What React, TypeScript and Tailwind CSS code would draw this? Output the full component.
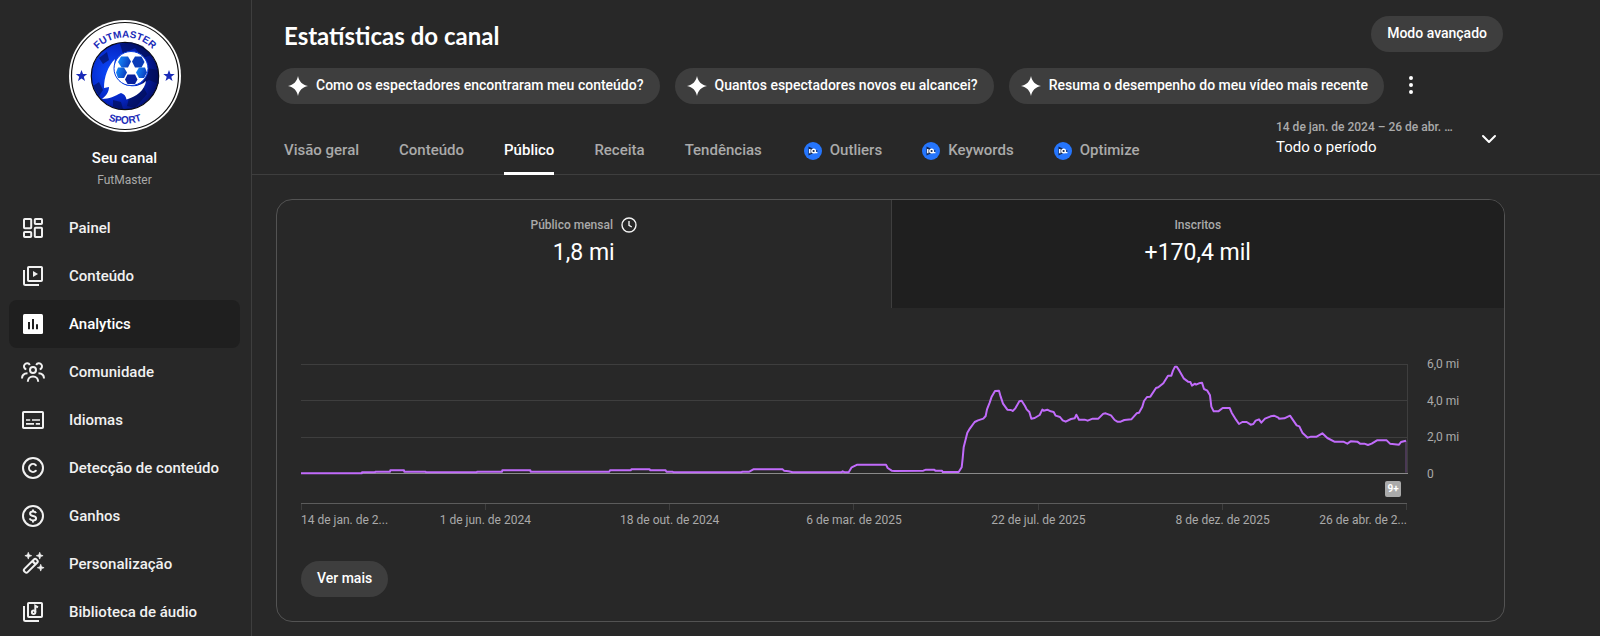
import type { ReactNode } from "react";
import { ChevronDown, Copyright, EllipsisVertical } from "lucide-react";

function Icon({ children }: { children: ReactNode }) {
  return (
    <svg
      viewBox="0 0 24 24"
      className="size-6 shrink-0"
      fill="none"
      stroke="currentColor"
      strokeWidth="2"
      aria-hidden="true"
    >
      {children}
    </svg>
  );
}

const stack = <path d="M3 6v13.5A1.5 1.5 0 0 0 4.500 21H18" />;

const navItems: { label: string; active?: boolean; icon: ReactNode }[] = [
  {
    label: "Painel",
    icon: (
      <Icon>
        <rect x="3" y="3" width="7.200" height="9.200" rx="0.800" />
        <rect x="3" y="16" width="7.200" height="5" rx="0.800" />
        <rect x="13.800" y="3" width="7.200" height="5" rx="0.800" />
        <rect x="13.800" y="11.800" width="7.200" height="9.200" rx="0.800" />
      </Icon>
    ),
  },
  {
    label: "Conteúdo",
    icon: (
      <Icon>
        {stack}
        <rect x="7" y="3" width="14" height="14" rx="0.800" />
        <path d="M12 7v6l5-3z" fill="currentColor" stroke="none" />
      </Icon>
    ),
  },
  {
    label: "Analytics",
    active: true,
    icon: (
      <Icon>
        <rect x="2" y="2" width="20" height="20" rx="1.500" fill="currentColor" stroke="none" />
        <path d="M8 10v7.300M12 7v10.300M16 12.300v5" stroke="#1f1f1f" strokeWidth="2" />
      </Icon>
    ),
  },
  {
    label: "Comunidade",
    icon: (
      <Icon>
        <circle cx="12" cy="10" r="3" />
        <path d="M6.800 21.800c0-3.300 2.200-5.300 5.200-5.300s5.200 2 5.200 5.300" />
        <path d="M8.800 4.900A3.100 3.100 0 1 0 5.300 9.400" />
        <path d="M15.200 4.900a3.100 3.100 0 1 1 3.500 4.500" />
        <path d="M1 18.500c0-3 1.800-5 5.500-5.200" />
        <path d="M23 18.500c0-3-1.800-5-5.500-5.200" />
      </Icon>
    ),
  },
  {
    label: "Idiomas",
    icon: (
      <Icon>
        <rect x="2" y="4" width="20" height="16" rx="0.800" />
        <path d="M5 12h4.200M11 12h8M5 15.900h8M14.800 15.900H19" strokeWidth="1.700" />
      </Icon>
    ),
  },
  { label: "Detecção de conteúdo", icon: <Copyright className="size-6 shrink-0" strokeWidth={2} /> },
  {
    label: "Ganhos",
    icon: (
      <Icon>
        <circle cx="12" cy="12" r="10" />
        <path
          d="M15 9.200C14.600 8.100 13.500 7.600 12 7.600c-1.700 0-2.900.8-2.900 2.100 0 3.100 6 1.300 6 4.500 0 1.400-1.300 2.200-3.100 2.200-1.700 0-2.900-.7-3.200-2M12 5.500v2M12 16.500v2"
          strokeWidth="2"
        />
      </Icon>
    ),
  },
  {
    label: "Personalização",
    icon: (
      <Icon>
        <rect x="1.300" y="11.500" width="17" height="4.600" rx="1.800" transform="rotate(-45 9.800 13.800)" />
        <path d="M11.300 9l3.400 3.400" strokeWidth="2.400" />
        <path
          d="M7.300.3l.9 2.500 2.500.9-2.500.9-.9 2.500-.9-2.500-2.500-.9 2.500-.9zM18.700.3l.9 2.500 2.500.9-2.500.9-.9 2.500-.9-2.500-2.500-.9 2.500-.9zM19.700 12.300l.9 2.500 2.500.9-2.500.9-.9 2.500-.9-2.500-2.500-.9 2.500-.9z"
          fill="currentColor"
          strokeWidth="0.700"
        />
      </Icon>
    ),
  },
  {
    label: "Biblioteca de áudio",
    icon: (
      <Icon>
        {stack}
        <rect x="7" y="3" width="14" height="14" rx="0.800" />
        <circle cx="12.600" cy="12.200" r="1.700" />
        <path d="M14.300 12.200V5.800l2.700 1.500" />
      </Icon>
    ),
  },
];

function Star({ x }: { x: number }) {
  return (
    <path
      transform={`translate(${x} 56)`}
      fill="#1a2bb8"
      d="M0-6 1.500-1.900 5.700-1.900 2.300.8 3.500 5 0 2.500-3.500 5-2.300.8-5.700-1.900-1.500-1.900z"
    />
  );
}

function ChannelLogo() {
  return (
    <svg viewBox="0 0 112 112" className="size-28" role="img" aria-label="FutMaster Sport">
      <defs>
        <radialGradient id="field" cx="0.3" cy="0.45" r="0.75">
          <stop offset="0" stopColor="#0b4bff" />
          <stop offset="0.55" stopColor="#0526c4" />
          <stop offset="1" stopColor="#020a5c" />
        </radialGradient>
        <linearGradient id="patch" x1="0" y1="0" x2="1" y2="0.3">
          <stop offset="0" stopColor="#1590ff" />
          <stop offset="1" stopColor="#0a3fc0" />
        </linearGradient>
        <path id="arc-top" d="M17.500 56a38.500 38.500 0 0 1 77 0" />
        <path id="arc-bottom" d="M8.500 56a47.500 47.500 0 0 0 95 0" />
      </defs>
      <circle cx="56" cy="56" r="56" fill="#fff" />
      <circle cx="56" cy="56" r="53.500" fill="none" stroke="#111" strokeWidth="1.200" />
      <circle cx="56" cy="56" r="33.700" fill="url(#field)" stroke="#0a0a14" strokeWidth="1.200" />
      <g fill="#020b4d" opacity="0.600">
        <path d="M51 24l3 10 12-6 8 10 8-3-8-9-12-4zM78 48l11 2 1 14-10-4-7 4zM60 78l14-12 4 8-12 14-8-2zM24 66l6-4 4 8-4 6zM44 80l8 2 2 7-10-2zM30 38l8-6 2 8-6 4z" />
      </g>
      <path
        fill="#fff"
        d="M46 39C39 46 35 57 35 68l5-1c0 5-3 9-7 12 7 0 13-3 19-6 3 1 5 3 5.500 6.500C67 77 76 70 77 61c-4 4-10 6-16 5-11-1-18-12-15-27z"
      />
      <circle cx="62" cy="48.500" r="17" fill="#fff" stroke="#0a3fe0" strokeWidth="1" />
      <g fill="url(#patch)">
        <path d="M52 36.500h7l3 5-3 6h-6.500l-3.500-5.500z" />
        <path d="M66 36.500h6.500l3 5.500-3 5.500H66l-3-6z" fill="#0a3cb8" />
        <path d="M49 47.500h6l3 5-3 5.500h-6l-2-5.500z" />
        <path d="M70 47.500h6l2 5-3 5.500h-5l-3-5.500z" />
        <path d="M58.500 54.500h7.500l2.500 5-2.500 4.500h-7.500l-2.500-4.500z" fill="#071f9c" />
      </g>
      <Star x={12.5} />
      <Star x={100} />
      <g fill="#1a2bb8" fontFamily="Liberation Sans, sans-serif" fontWeight="700" fontSize="10" textAnchor="middle">
        <text>
          <textPath href="#arc-top" startOffset="50%">FUTMASTER</textPath>
        </text>
        <text>
          <textPath href="#arc-bottom" startOffset="50%">SPORT</textPath>
        </text>
      </g>
    </svg>
  );
}

function Sidebar() {
  return (
    <aside className="flex w-[252px] shrink-0 flex-col border-r border-[#3e3e3e] pt-5">
      <div className="flex flex-col items-center pr-0.5">
        <ChannelLogo />
        <p className="mt-4 text-[15px] leading-5 font-medium text-white">Seu canal</p>
        <p className="mt-1 text-xs leading-4 text-[#aaa]">FutMaster</p>
      </div>
      <nav className="mt-4 flex flex-col pr-[11px] pl-[9px]">
        {navItems.map((item) => (
          <a
            key={item.label}
            href="#"
            aria-current={item.active ? "page" : undefined}
            className={
              item.active
                ? "flex h-12 items-center gap-6 rounded-lg bg-[#1f1f1f] pl-3 text-[15px] font-medium text-white"
                : "flex h-12 items-center gap-6 pl-3 text-[15px] font-medium text-[#f1f1f1]"
            }
          >
            {item.icon}
            {item.label}
          </a>
        ))}
      </nav>
    </aside>
  );
}

function Sparkle() {
  return (
    <svg viewBox="0 0 20 20" className="size-5 shrink-0" fill="#fff" aria-hidden="true">
      <path d="M10 0c1.100 5.600 4.400 8.900 10 10-5.600 1.100-8.900 4.400-10 10-1.100-5.600-4.400-8.900-10-10 5.600-1.100 8.900-4.400 10-10z" />
    </svg>
  );
}

function IqBadge() {
  return (
    <svg viewBox="0 0 18 18" className="size-[18px] shrink-0" aria-hidden="true">
      <circle cx="9" cy="9" r="9" fill="#2575fc" />
      <path d="M4.500 4.500 14 9l-9.500 4.500z" fill="#12264f" />
      <path d="M5.800 7v4.200" stroke="#fff" strokeWidth="1.500" />
      <circle cx="9.600" cy="9" r="1.800" fill="none" stroke="#fff" strokeWidth="1.400" />
      <path d="M10.400 10.600h3" stroke="#fff" strokeWidth="1.300" />
    </svg>
  );
}

const prompts = [
  "Como os espectadores encontraram meu conteúdo?",
  "Quantos espectadores novos eu alcancei?",
  "Resuma o desempenho do meu vídeo mais recente",
];

type TabItem = { label: string; active?: boolean; iq?: boolean };

const tabs: TabItem[] = [
  { label: "Visão geral" },
  { label: "Conteúdo" },
  { label: "Público", active: true },
  { label: "Receita" },
  { label: "Tendências" },
];

const extensionTabs: TabItem[] = [
  { label: "Outliers", iq: true },
  { label: "Keywords", iq: true },
  { label: "Optimize", iq: true },
];

function Tab({ tab }: { tab: TabItem }) {
  return (
    <button
      type="button"
      className={
        tab.active
          ? "flex h-[50px] items-center border-b-[3px] border-white pt-1 text-[15px] font-medium whitespace-nowrap text-white"
          : "flex h-[50px] items-center gap-2 border-b-[3px] border-transparent pt-1 text-[15px] font-medium whitespace-nowrap text-[#aaa]"
      }
    >
      {tab.iq && <IqBadge />}
      {tab.label}
    </button>
  );
}

const series =
  "0,328 182,328 183,325 222,325 223,323 267,323 268,319 309,319 310,323 374,323 375,325 527,325 528,323 603,323 604,319 688,319 689,323 925,323 927,319 989,319 991,316 1046,316 1048,319 1094,319 1096,323 1115,323 1117,325 " +
  "1322,325 1323,323 1345,323 1357,316 1445,316 1449,320 1463,322 1475,325 1621,325 1625,322 1631,325 1643,325 1652,310 1669,302 1755,302 1760,312 1772,320 1781,321 1867,320 1875,317 1899,317 1903,320 1923,320 1925,324 1973,324 " +
  "1982,310 1985,283 1988,250 1999,206 2007,193 2021,174 2031,169 2047,164 2054,156 2058,136 2066,116 2072,98 2082,81 2094,80 2099,98 2106,119 2119,137 2130,138 2135,141 2143,133 2155,112 2162,110 2172,126 2177,136 2185,144 2191,164 2201,162 2216,153 2224,137 2228,140 2239,137 2249,142 2258,144 2264,155 2277,159 2285,169 2294,173 2310,165 2321,163 2326,152 2334,167 2351,167 2360,170 2375,164 2392,164 2407,149 2414,148 2430,154 2441,168 2449,173 2459,173 2470,168 2491,166 2507,148 2514,146 2524,128 2529,111 2538,99 2548,98 2565,72 2572,70 2587,58 2601,35 2611,35 2616,20 2622,8 2627,8 2635,20 2648,43 2661,53 2668,54 2673,65 2682,59 2685,62 2694,58 " +
  "2703,56 2709,75 2719,80 2727,94 2731,128 2738,142 2752,142 2765,132 2786,132 2792,146 2805,167 2814,180 2824,174 2837,174 2849,182 2857,180 2864,170 2874,166 2881,176 2892,164 2909,157 2919,155 2932,161 2934,164 2950,163 2967,155 2987,184 2995,187 3004,206 3020,221 3030,218 3047,218 3064,208 3079,222 3100,233 3127,233 3139,239 3149,232 3169,233 3177,239 3190,239 3201,243 3212,239 3228,229 3257,229 3267,239 3294,242 3300,234 3315,230";

const dates = ["1 de jun. de 2024", "18 de out. de 2024", "6 de mar. de 2025", "22 de jul. de 2025", "8 de dez. de 2025"];

function Chart() {
  return (
    <div className="flex gap-5 px-6 pt-14 text-xs leading-4 text-[#aaa]">
      <div className="min-w-0 flex-1">
        <svg
          viewBox="0 0 3318 330"
          preserveAspectRatio="none"
          className="block h-[110px] w-full overflow-visible"
          fill="none"
          role="img"
          aria-label="Público mensal"
        >
          <g stroke="#3e3e3e">
            <path d="M0 1.500H3318M0 109.500H3318M0 220.500H3318" vectorEffect="non-scaling-stroke" />
            <path d="M3319.500 0V328" vectorEffect="non-scaling-stroke" />
          </g>
          <path d="M0 328.500H3321" stroke="#8a8a8a" vectorEffect="non-scaling-stroke" />
          <path d="M3315 230V326" stroke="#6d4b80" vectorEffect="non-scaling-stroke" />
          <polyline
            points={series}
            stroke="#c16bfb"
            strokeWidth="2"
            strokeLinejoin="round"
            vectorEffect="non-scaling-stroke"
          />
        </svg>
        <div className="flex h-[29px] items-start justify-end pt-[7px] pr-[6px]">
          <span className="flex size-4 items-center justify-center rounded-xs bg-[#aaa] text-[10px] font-bold text-white">
            9+
          </span>
        </div>
        <div className="flex h-[7px] justify-between border-t border-[#5c5c5c]">
          {[0, 1, 2, 3, 4, 5, 6].map((tick) => (
            <span key={tick} className="w-px bg-[#3e3e3e]" />
          ))}
        </div>
        <div className="mt-[2px] grid grid-cols-[1fr_2fr_2fr_2fr_2fr_2fr_1fr] text-center whitespace-nowrap">
          <span className="text-left">14 de jan. de 2...</span>
          {dates.map((date) => (
            <span key={date}>{date}</span>
          ))}
          <span className="text-right">26 de abr. de 2...</span>
        </div>
      </div>
      <div className="-mt-2 flex h-[126px] w-[53px] flex-col justify-between">
        <span>6,0 mi</span>
        <span>4,0 mi</span>
        <span>2,0 mi</span>
        <span>0</span>
      </div>
    </div>
  );
}

export default function App() {
  return (
    <div className="flex min-h-screen bg-[#282828] font-[Roboto,sans-serif] text-white">
      <Sidebar />
      <main className="min-w-0 flex-1">
        <header className="border-b border-[#3e3e3e] pt-4 pr-[95px] pl-6">
          <div className="flex h-9 items-center justify-between pr-0.5 pl-2">
            <h1 className="pt-1 font-[Lato,sans-serif] text-2xl leading-8 font-bold">Estatísticas do canal</h1>
            <button type="button" className="h-9 rounded-full bg-[#3e3e3e] px-4 pb-0.5 text-sm font-medium">
              Modo avançado
            </button>
          </div>
          <div className="mt-4 flex items-center gap-[15px]">
            {prompts.map((prompt) => (
              <button
                key={prompt}
                type="button"
                className="flex h-9 items-center gap-2 rounded-full bg-[#3e3e3e] pr-4 pl-3 text-sm font-medium whitespace-nowrap"
              >
                <Sparkle />
                <span className="pb-0.5">{prompt}</span>
              </button>
            ))}
            <button type="button" aria-label="Mais opções" className="pb-0.5">
              <EllipsisVertical className="size-6" fill="currentColor" />
            </button>
          </div>
          <div className="flex h-[70px] items-start justify-between">
            <nav className="-mb-px flex gap-10 self-end pl-2">
              {tabs.map((tab) => (
                <Tab key={tab.label} tab={tab} />
              ))}
              <div className="flex gap-10 pl-0.5">
                {extensionTabs.map((tab) => (
                  <Tab key={tab.label} tab={tab} />
                ))}
              </div>
            </nav>
            <button type="button" className="flex w-[229px] items-center justify-between pt-[15px] pr-1 text-left whitespace-nowrap">
              <span className="flex flex-col">
                <span className="text-xs leading-4 font-medium text-[#aaa]">14 de jan. de 2024 – 26 de abr. …</span>
                <span className="text-[15px] leading-6">Todo o período</span>
              </span>
              <ChevronDown className="size-6" />
            </button>
          </div>
        </header>
        <section className="mt-6 mr-[95px] ml-6 overflow-hidden rounded-2xl border border-[#535353]">
          <div className="grid h-[108px] grid-cols-2">
            <button type="button" className="flex flex-col items-center pt-[15px]">
              <span className="flex items-center gap-2 text-xs leading-5 font-medium text-[#aaa]">
                Público mensal
                <svg viewBox="0 0 16 16" className="size-4" fill="none" stroke="#f1f1f1" strokeWidth="1.400" aria-hidden="true">
                  <circle cx="8" cy="8" r="7" />
                  <path d="M8 4v4.400l2.800 1.600" />
                </svg>
              </span>
              <span className="text-[23px] leading-9">1,8 mi</span>
            </button>
            <button type="button" className="flex flex-col items-center border-l border-[#3e3e3e] bg-[#1f1f1f] pt-[15px]">
              <span className="text-xs leading-5 font-medium text-[#aaa]">Inscritos</span>
              <span className="text-[23px] leading-9">+170,4 mil</span>
            </button>
          </div>
          <Chart />
          <div className="px-6 pt-[33px] pb-6">
            <button type="button" className="block h-9 rounded-full bg-[#3e3e3e] px-4 pb-0.5 text-sm font-medium">
              Ver mais
            </button>
          </div>
        </section>
      </main>
    </div>
  );
}
